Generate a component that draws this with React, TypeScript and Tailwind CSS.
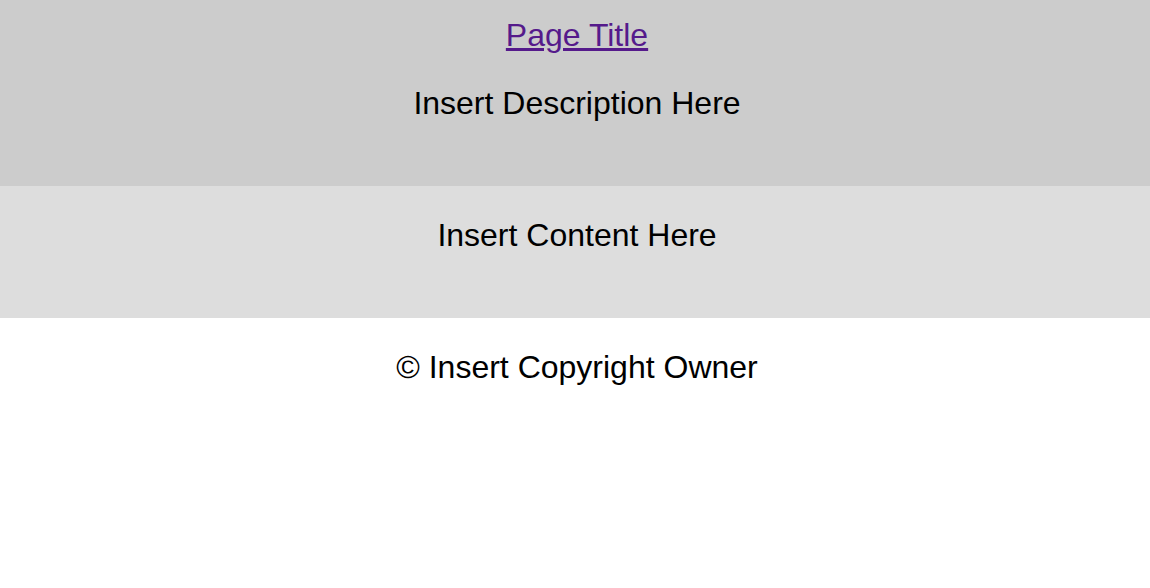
export default function App() {
  return (
    <div className="min-h-screen bg-white pl-[4px] text-center text-[32px] leading-[37px] text-black [font-family:'Liberation_Sans',Arial,sans-serif]">
      <header className="-ml-[4px] bg-[#cccccc] pl-[4px] pt-[17px] pb-[64px]">
        <h1 className="font-normal">
          <a href="#" className="text-[#551a8b] underline">
            Page Title
          </a>
        </h1>
        <p className="mt-[31px]">Insert Description Here</p>
      </header>
      <main className="-ml-[4px] bg-[#dddddd] pl-[4px] pt-[31px] pb-[64px]">
        <p>Insert Content Here</p>
      </main>
      <footer className="pt-[31px]">
        <p>© Insert Copyright Owner</p>
      </footer>
    </div>
  );
}
